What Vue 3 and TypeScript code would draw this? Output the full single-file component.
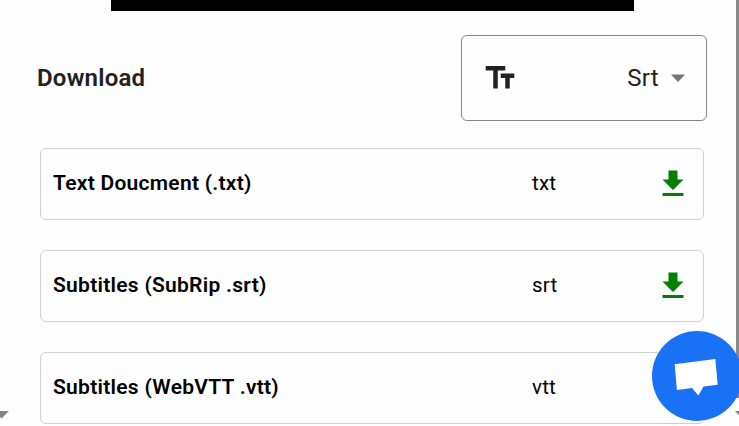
<script setup lang="ts">
interface DownloadFormat {
  label: string
  ext: string
}

const formats: DownloadFormat[] = [
  { label: 'Text Doucment (.txt)', ext: 'txt' },
  { label: 'Subtitles (SubRip .srt)', ext: 'srt' },
  { label: 'Subtitles (WebVTT .vtt)', ext: 'vtt' },
]
</script>

<template>
  <div class="page">
    <div class="video"></div>
    <header class="toolbar">
      <h2 class="title">Download</h2>
      <button class="select" type="button">
        <svg class="text-icon" viewBox="0 0 24 24">
          <path d="M2.5 4v3h5v12h3V7h5V4h-13zm19 5h-9v3h3v7h3v-7h3V9z" />
        </svg>
        <span class="value">Srt</span>
        <svg class="caret" viewBox="0 0 14 8"><path d="M0 0.6h14L7 7.9z" /></svg>
      </button>
    </header>
    <ul class="list">
      <li v-for="format in formats" :key="format.ext" class="row">
        <span class="label">{{ format.label }}</span>
        <span class="ext">{{ format.ext }}</span>
        <svg class="download" viewBox="0 0 24 24">
          <path d="M5 20h14v-2H5v2zM19 9h-4V3H9v6H5l7 7 7-7z" />
        </svg>
      </li>
    </ul>
    <div class="edge"></div>
    <svg class="scroll-left" viewBox="0 0 9 8"><path d="M0 0h9L1.5 7.5 0 6z" /></svg>
    <svg class="scroll-right" viewBox="0 0 4 5"><path d="M0 0h4v4.3z" /></svg>
    <div class="chat">
      <svg viewBox="0 0 90 90">
        <path d="M22.7 33.3 63.3 28.1l2.4 25.6-14.2 1.9L46.4 64.6 40 57l-15.1 1.9z" />
      </svg>
    </div>
  </div>
</template>

<style>
body {
  margin: 0;
  overflow: hidden;
}
</style>

<style scoped>
.page {
  position: relative;
  box-sizing: border-box;
  width: 739px;
  height: 426px;
  overflow: hidden;
  background: #fefefe;
  font-family: Roboto, sans-serif;
}

.video {
  width: 523px;
  height: 11px;
  margin-left: 111px;
  background: #000;
}

.toolbar {
  display: flex;
  align-items: center;
  justify-content: space-between;
  margin: 24px 32px 27px 37px;
}

.title {
  margin: 0;
  font-size: 24px;
  font-weight: 600;
  line-height: 30px;
  letter-spacing: 0.22px;
  color: #212121;
}

.select {
  display: flex;
  align-items: center;
  box-sizing: border-box;
  width: 246px;
  height: 86px;
  padding: 0 21px 0 20px;
  border: 1px solid #858585;
  border-radius: 6px;
  background: transparent;
  font-family: inherit;
  color: #212121;
}

.text-icon {
  width: 36px;
  height: 36px;
  fill: #212121;
}

.value {
  margin-left: auto;
  font-size: 24px;
  line-height: 30px;
  letter-spacing: 0.3px;
}

.caret {
  width: 14px;
  height: 8px;
  margin-left: 12px;
  fill: #757575;
}

.list {
  display: flex;
  flex-direction: column;
  gap: 30px;
  margin: 0;
  padding: 0 35px 0 40px;
  list-style: none;
}

.row {
  display: grid;
  grid-template-columns: 479px 1fr 36px;
  align-items: center;
  box-sizing: border-box;
  height: 72px;
  padding: 0 12px 0 12px;
  border: 1px solid #d0d0d3;
  border-radius: 6px;
  color: #000;
  font-size: 20px;
  line-height: 26px;
}

.label {
  padding-bottom: 2px;
  font-size: 21px;
  font-weight: 600;
  letter-spacing: 0.27px;
}

.ext {
  padding-bottom: 2px;
  font-size: 20.5px;
  letter-spacing: 0.2px;
}

.download {
  width: 36px;
  height: 36px;
  fill: #008000;
}

.edge {
  position: absolute;
  top: 0;
  right: 0;
  width: 3px;
  height: 398px;
  background: #888;
}

.scroll-left {
  position: absolute;
  top: 411px;
  left: 0;
  width: 9px;
  height: 8px;
  fill: #858585;
}

.scroll-right {
  position: absolute;
  top: 411px;
  right: 0;
  width: 4px;
  height: 5px;
  fill: #858585;
}

.chat {
  position: absolute;
  top: 331px;
  left: 652px;
  width: 90px;
  height: 90px;
  border-radius: 50%;
  background: #1972f5;
}

.chat svg {
  display: block;
  fill: #fff;
}
</style>
